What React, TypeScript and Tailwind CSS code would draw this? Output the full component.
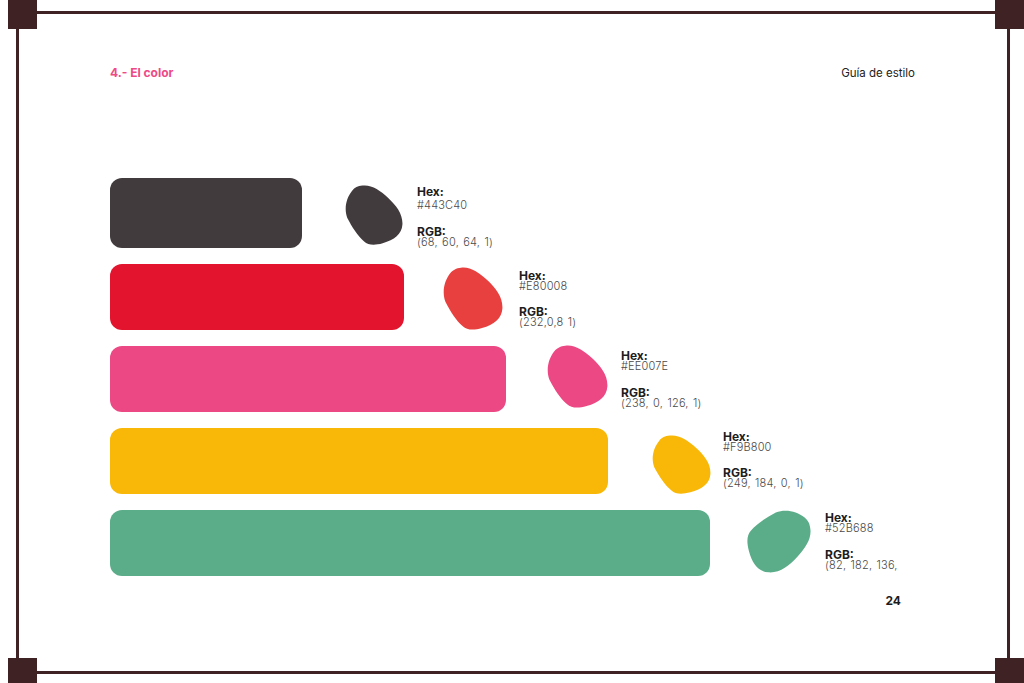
import React from "react";

type Row = {
  bar: string;
  slot: string;
  blob: string;
  blobColor: string;
  rotate?: string;
  text: string;
  hexGap: string;
  hex: string;
  rgb: string;
};

const rows: Row[] = [
  {
    bar: "w-[192px] h-[70px] bg-[#423b3e]",
    slot: "w-[115px] h-[70px]",
    blob: "ml-[43px] mt-[7px] w-[58px] h-[60px]",
    blobColor: "#423b3e",
    text: "mt-[8px]",
    hexGap: "mt-[3px]",
    hex: "#443C40",
    rgb: "(68, 60, 64, 1)",
  },
  {
    bar: "w-[294px] h-[66px] bg-[#e3152e]",
    slot: "w-[115px] h-[66px]",
    blob: "ml-[39px] mt-[3px] w-[60px] h-[63px]",
    blobColor: "#e8403f",
    text: "mt-[5.5px]",
    hexGap: "mt-0",
    hex: "#E80008",
    rgb: "(232,0,8 1)",
  },
  {
    bar: "w-[396px] h-[66px] bg-[#ec4884]",
    slot: "w-[115px] h-[66px]",
    blob: "ml-[41px] -mt-px w-[61px] h-[63px]",
    blobColor: "#ec4884",
    text: "mt-[4px]",
    hexGap: "mt-0",
    hex: "#EE007E",
    rgb: "(238, 0, 126, 1)",
  },
  {
    bar: "w-[498px] h-[66px] bg-[#f9b807]",
    slot: "w-[115px] h-[66px]",
    blob: "ml-[44px] mt-[7px] w-[59px] h-[59px]",
    blobColor: "#f9b807",
    text: "mt-[2.5px]",
    hexGap: "mt-0",
    hex: "#F9B800",
    rgb: "(249, 184, 0, 1)",
  },
  {
    bar: "w-[600px] h-[66px] bg-[#5bad89]",
    slot: "w-[115px] h-[66px]",
    blob: "ml-[37px] mt-0 w-[64px] h-[63px]",
    blobColor: "#5bad89",
    rotate: "rotate(90 50 50)",
    text: "mt-[2px]",
    hexGap: "mt-0",
    hex: "#52B688",
    rgb: "(82, 182, 136,",
  },
];

function Blob({ color, className, rotate }: { color: string; className: string; rotate?: string }) {
  return (
    <svg viewBox="0 0 100 100" preserveAspectRatio="none" className={className}>
      <path
        transform={rotate}
        fill={color}
        d="M30 1 C45 -1 60 8 75 22 C88 34 100 48 99 66 C98 82 85 92 65 97 C50 101 40 100 33 94 C22 85 12 70 4 55 C-2 40 2 22 12 10 C17 4 22 2 30 1 Z"
      />
    </svg>
  );
}

export default function App() {
  return (
    <div className="relative w-[1024px] h-[683px] overflow-hidden bg-white font-['Inter','Liberation_Sans',sans-serif]">
      {/* frame */}
      <div className="absolute left-[16px] top-[11px] w-[994px] h-[663px] border-[3px] border-[#3f2324]" />
      <div className="absolute left-[8px] top-0 w-[29px] h-[29px] bg-[#3f2324]" />
      <div className="absolute left-[995px] top-0 w-[29px] h-[29px] bg-[#3f2324]" />
      <div className="absolute left-[8px] top-[658px] w-[29px] h-[29px] bg-[#3f2324]" />
      <div className="absolute left-[995px] top-[658px] w-[29px] h-[29px] bg-[#3f2324]" />

      <div className="relative flex flex-col pl-[110px] pt-[66.5px]">
        <div className="flex justify-between pr-[109px] text-[12px] leading-[12px]">
          <span className="font-bold text-[#ee4a86]">4.- El color</span>
          <span className="text-[#222222] text-[11.5px]">Guía de estilo</span>
        </div>

        <div className="mt-[99.5px] flex flex-col gap-4">
          {rows.map((r) => (
            <div key={r.hex} className="flex items-start">
              <div className={`${r.bar} shrink-0 rounded-[12px]`} />
              <div className={`${r.slot} shrink-0`}>
                <Blob color={r.blobColor} className={`${r.blob} block`} rotate={r.rotate} />
              </div>
              <div className={`${r.text} text-[11px] leading-[11px]`}>
                <div className="text-[12px] font-bold text-[#1d1d1d]">Hex:</div>
                <div className={`${r.hexGap} font-light text-[#4a4a4a] tracking-[0.15px]`}>{r.hex}</div>
                <div className="mt-[14.7px] text-[12px] font-bold text-[#1d1d1d]">RGB:</div>
                <div className="font-light text-[#4a4a4a] whitespace-nowrap tracking-[0.2px] [word-spacing:1px]">{r.rgb}</div>
              </div>
            </div>
          ))}
        </div>

        <div className="mt-[19px] flex justify-end pr-[123px]">
          <span className="text-[12px] leading-[12px] font-bold text-[#1d1d1d]">24</span>
        </div>
      </div>
    </div>
  );
}
